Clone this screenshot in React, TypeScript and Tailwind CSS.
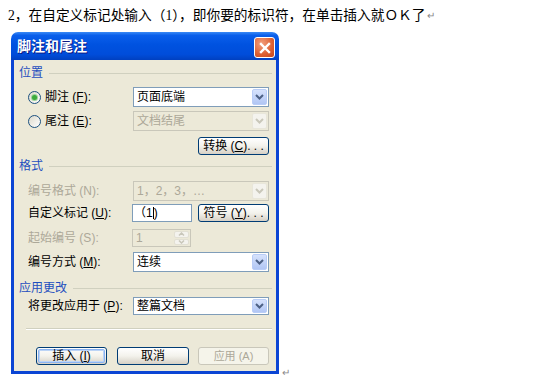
import React from "react";

const font = "font-['Liberation_Sans','Noto_Sans_CJK_SC',sans-serif]";

// Hotkey label, e.g. 脚注 (F):
function Hot({ text, k, tail = ":", disabled = false }: { text: string; k: string; tail?: string; disabled?: boolean }) {
    return (
        <span className={`whitespace-nowrap ${disabled ? "text-[#ACA899]" : "text-black"}`}>
            {text} (<span className={disabled ? "" : "underline underline-offset-[1px]"}>{k}</span>){tail}
        </span>
    );
}

function Chevron({ color }: { color: string }) {
    return (
        <svg width="9" height="6" viewBox="0 0 9 6">
            <path d="M1 1 L4.5 4.5 L8 1" fill="none" stroke={color} strokeWidth="2" />
        </svg>
    );
}

function Combo({ text, disabled = false, h = "h-[20px]" }: { text: string; disabled?: boolean; h?: string }) {
    return (
        <div
            className={`w-[136px] ${h} flex items-stretch border p-[1px] ${
                disabled ? "border-[#C9C7BA] bg-[#ECE9D8] text-[#ACA899]" : "border-[#7F9DB9] bg-white text-black"
            }`}
        >
            <div className="flex-1 flex items-center pl-[2px] text-[12px] leading-none">{text}</div>
            <div
                className={`w-[15px] flex items-center justify-center rounded-[2px] border ${
                    disabled
                        ? "border-[#E8E6DA] bg-[#F4F3EE]"
                        : "border-[#B9CDF7] bg-gradient-to-b from-[#D6E2FC] to-[#B1C6F4]"
                }`}
            >
                <Chevron color={disabled ? "#C9C7BA" : "#4D6185"} />
            </div>
        </div>
    );
}

function Btn({
    children,
    w = "w-[71px]",
    variant = "normal",
}: {
    children: React.ReactNode;
    w?: string;
    variant?: "normal" | "default" | "disabled";
}) {
    if (variant === "disabled") {
        return (
            <div className={`${w} h-[18px] rounded-[3px] border border-[#C9C7BA] bg-[#F5F4EA] flex items-center justify-center text-[11px] text-[#ACA899]`}>
                {children}
            </div>
        );
    }
    return (
        <div className={`${w} h-[18px] rounded-[3px] border border-[#003C74] bg-gradient-to-b from-white via-[#F3F2EC] to-[#D6D0C5] p-[1px]`}>
            <div
                className={`h-full rounded-[2px] flex items-center justify-center text-[12px] text-black leading-none ${
                    variant === "default" ? "border border-[#8CB4F2] shadow-[inset_0_0_0_1px_#BCD4F6]" : ""
                }`}
            >
                {children}
            </div>
        </div>
    );
}

function GroupHeader({ title }: { title: string }) {
    return (
        <div className="h-[14px] flex items-center pl-[5px] pr-[4px] gap-[6px]">
            <span className="text-[12px] text-[#1F4FBF] leading-none whitespace-nowrap">{title}</span>
            <div className="flex-1 h-px bg-[#D0D0BF]" />
        </div>
    );
}

function Radio({ checked }: { checked: boolean }) {
    return (
        <div className="w-[13px] h-[13px] rounded-full border border-[#1C5180] bg-gradient-to-br from-[#DCD9CB] to-white flex items-center justify-center">
            {checked && <div className="w-[5px] h-[5px] rounded-full bg-[#3DAA3D] shadow-[0_0_0_1px_#9BD39B]" />}
        </div>
    );
}

function Dialog() {
    return (
        <div className="w-[268px] flex flex-col">
            {/* Title bar */}
            <div className="h-[28px] rounded-t-[7px] flex items-center justify-between pl-[6px] pr-[4px] bg-[linear-gradient(to_bottom,#3A8AF5_0%,#0A5FEB_12%,#0052E0_45%,#004DDA_80%,#0040C0_100%)]">
                <span className="text-[14px] font-bold text-white leading-none [text-shadow:1px_1px_0_#0A1883]">脚注和尾注</span>
                <div className="mt-[3px] w-[21px] h-[21px] rounded-[3px] border border-white bg-[radial-gradient(circle_at_35%_30%,#F2A07E,#DC5F32_60%,#C2451B)] flex items-center justify-center">
                    <svg width="12" height="12" viewBox="0 0 12 12">
                        <path d="M2 2 L10 10 M10 2 L2 10" stroke="white" strokeWidth="2.4" strokeLinecap="square" />
                    </svg>
                </div>
            </div>

            {/* Client area */}
            <div className="border-x-[3px] border-b-[3px] border-[#0B45D4] bg-[#ECE9D8] flex flex-col pt-[6px] pb-[6px] text-[12px]">
                <GroupHeader title="位置" />

                <div className="mt-[7px] h-[20px] flex items-center pl-[14px] pr-[7px]">
                    <Radio checked />
                    <span className="ml-[4px] w-[88px]">
                        <Hot text="脚注" k="F" />
                    </span>
                    <Combo text="页面底端" />
                </div>

                <div className="mt-[4px] h-[20px] flex items-center pl-[14px] pr-[7px]">
                    <Radio checked={false} />
                    <span className="ml-[4px] w-[88px]">
                        <Hot text="尾注" k="E" />
                    </span>
                    <Combo text="文档结尾" disabled />
                </div>

                <div className="mt-[6px] h-[18px] flex justify-end pr-[7px]">
                    <Btn>
                        <Hot text="转换" k="C" tail=". . ." />
                    </Btn>
                </div>

                <div className="mt-[4px]">
                    <GroupHeader title="格式" />
                </div>

                <div className="mt-[8px] h-[20px] flex items-center pl-[14px] pr-[7px]">
                    <span className="w-[105px]">
                        <Hot text="编号格式" k="N" disabled />
                    </span>
                    <Combo text="1，2，3，…" disabled />
                </div>

                <div className="mt-[3px] h-[18px] flex items-center pl-[14px] pr-[7px]">
                    <span className="w-[104px]">
                        <Hot text="自定义标记" k="U" />
                    </span>
                    <div className="w-[60px] h-[18px] border border-[#7F9DB9] bg-white flex items-center pl-[1px] text-[12px] leading-none">
                        <span>（1</span>
                        <span className="w-px h-[12px] bg-black" />
                        <span>)</span>
                    </div>
                    <div className="ml-auto">
                        <Btn>
                            <Hot text="符号" k="Y" tail=". . ." />
                        </Btn>
                    </div>
                </div>

                <div className="mt-[7px] h-[18px] flex items-center pl-[14px] pr-[7px]">
                    <span className="w-[104px]">
                        <Hot text="起始编号" k="S" disabled />
                    </span>
                    <div className="w-[59px] h-[18px] border border-[#C9C7BA] bg-[#ECE9D8] flex items-stretch p-[1px]">
                        <span className="flex-1 flex items-center pl-[2px] text-[#ACA899] leading-none">1</span>
                        <div className="w-[15px] flex flex-col gap-px">
                            <div className="flex-1 rounded-[2px] bg-[#F4F3EE] border border-[#E2E0D4] flex items-center justify-center">
                                <svg width="7" height="4" viewBox="0 0 7 4">
                                    <path d="M1 3.5 L3.5 1 L6 3.5" fill="none" stroke="#C9C7BA" strokeWidth="1.5" />
                                </svg>
                            </div>
                            <div className="flex-1 rounded-[2px] bg-[#F4F3EE] border border-[#E2E0D4] flex items-center justify-center">
                                <svg width="7" height="4" viewBox="0 0 7 4">
                                    <path d="M1 0.5 L3.5 3 L6 0.5" fill="none" stroke="#C9C7BA" strokeWidth="1.5" />
                                </svg>
                            </div>
                        </div>
                    </div>
                </div>

                <div className="mt-[5px] h-[20px] flex items-center pl-[14px] pr-[7px]">
                    <span className="w-[105px]">
                        <Hot text="编号方式" k="M" />
                    </span>
                    <Combo text="连续" />
                </div>

                <div className="mt-[9px]">
                    <GroupHeader title="应用更改" />
                </div>

                <div className="mt-[2px] h-[18px] flex items-center pl-[14px] pr-[7px]">
                    <span className="w-[105px]">
                        <Hot text="将更改应用于" k="P" />
                    </span>
                    <Combo text="整篇文档" h="h-[18px]" />
                </div>

                <div className="mt-[13px] ml-[12px] mr-[4px] h-px bg-[#D0D0BF] shadow-[0_1px_0_white]" />

                <div className="mt-[18px] h-[18px] flex items-center pl-[22px] gap-[10px]">
                    <Btn variant="default">
                        <Hot text="插入" k="I" tail="" />
                    </Btn>
                    <Btn w="w-[72px]">取消</Btn>
                    <div className="-ml-[1px]">
                        <Btn variant="disabled">应用 (A)</Btn>
                    </div>
                </div>
            </div>
        </div>
    );
}

export default function App() {
    return (
        <div className={`w-[546px] h-[390px] bg-white ${font} overflow-hidden`}>
            <div className="pt-[8px] pl-[8px] h-[24px] flex items-center text-[13.7px] leading-[16px] text-black whitespace-nowrap font-['Liberation_Serif','Noto_Sans_CJK_SC',serif]">
                2，在自定义标记处输入（1），即你要的标识符，在单击插入就ＯＫ了
                <span className="ml-[2px] text-[10px] text-[#888]">↵</span>
            </div>
            <div className="mt-[8px] ml-[11px] flex items-end">
                <Dialog />
                <span className="ml-[3px] -mb-[4px] text-[10px] text-[#888] leading-none">↵</span>
            </div>
        </div>
    );
}
